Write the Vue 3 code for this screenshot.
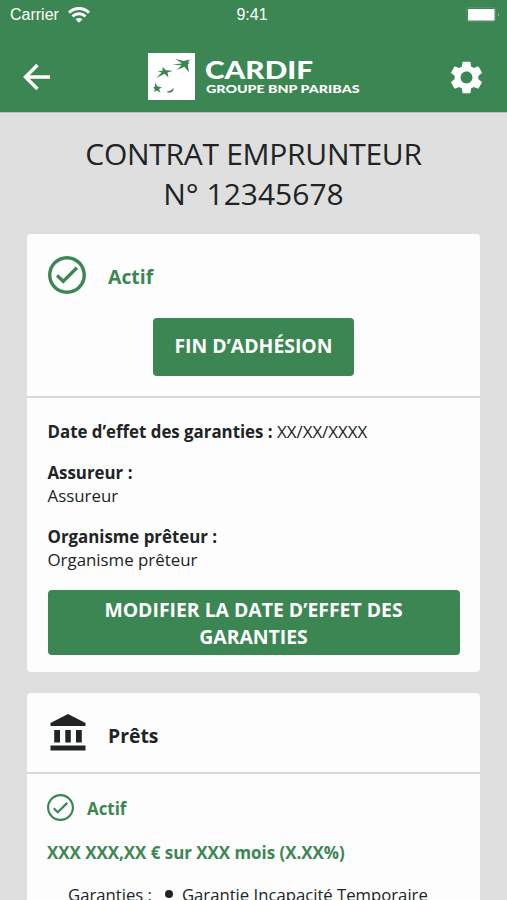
<script setup>
const fields = [
  { label: 'Assureur :', value: 'Assureur' },
  { label: 'Organisme prêteur :', value: 'Organisme prêteur' },
]
</script>

<template>
  <div class="screen">
    <header class="top">
      <div class="status">
        <div class="carrier">
          <span class="carrier-name">Carrier</span>
          <svg class="wifi" viewBox="0 0 22 16" width="22" height="16">
            <g fill="none" stroke="#fff" stroke-width="2.9">
              <path d="M1 5.600C6.800 .2 15.200 .2 21 5.600" />
              <path d="M4.500 9.300C8.300 5.900 13.700 5.900 17.500 9.300" />
            </g>
            <path d="M7.500 12.300C9.500 10.500 12.500 10.500 14.500 12.300L11 15.800Z" fill="#fff" />
          </svg>
        </div>
        <span class="clock">9:41</span>
        <svg class="battery" viewBox="0 0 34 15" width="34" height="15">
          <rect x=".5" y=".5" width="29" height="14" rx="2.5" fill="none" stroke="#fff" stroke-opacity=".12" />
          <rect x="2" y="2" width="26.500" height="11.500" rx=".6" fill="#fff" />
          <path d="M32 5.500q2 2 0 4z" fill="#fff" fill-opacity=".4" />
        </svg>
      </div>
      <nav class="bar">
        <svg class="back" viewBox="0 0 28 28" width="28" height="28">
          <path d="M27 14H3M14.500 2L2.500 14l12 12" fill="none" stroke="#fff" stroke-width="3.4" />
        </svg>
        <div class="brand">
          <svg class="emblem" viewBox="0 0 47 47" width="47" height="47">
            <rect width="47" height="47" fill="#fff" />
            <g fill="#3c8653">
              <path d="M27 5.800L35.500 8L42 6.500L40 9.500L42 9.800L39.800 11.200L41 19.500L36.500 13.700L29 17L33.500 12.200L24.500 11.700L34 10.200Z" />
              <path d="M14.500 14L18 17.200L25 17.800L19.500 19.500L20.500 24.500L16.500 20.800L8.500 25L13.500 19.500L9.500 18L14.500 17.800Z" />
              <path d="M7 29.500L9.300 33.300L14 34.500L11 36L12.500 39.700L9 37.500L6.200 39L6.900 36L5 34.700L6.900 33.700Z" />
              <path d="M19 38.600L22.500 37.500L26 35L25 38L23 39.500L19.500 39.500Z" />
            </g>
          </svg>
          <svg class="wordmark" viewBox="0 0 157 47" width="157" height="47" fill="#fff">
            <text class="cardif" x="0" y="25.700" textLength="108" lengthAdjust="spacingAndGlyphs">CARDIF</text>
            <text class="group" x="1" y="40.300" textLength="153.500" lengthAdjust="spacingAndGlyphs">GROUPE BNP PARIBAS</text>
          </svg>
        </div>
        <svg class="gear" viewBox="2 2 20 20" width="33" height="33">
          <path fill="#fff" d="M19.140 12.940c.04-.3.060-.61.060-.94 0-.32-.02-.64-.07-.94l2.030-1.580c.18-.14.230-.41.120-.61l-1.920-3.320c-.12-.22-.37-.29-.59-.22l-2.390.96c-.5-.38-1.030-.7-1.620-.94l-.36-2.540c-.04-.24-.24-.41-.48-.41h-3.840c-.24 0-.43.17-.47.41l-.36 2.540c-.59.24-1.130.57-1.620.94l-2.390-.96c-.22-.08-.47 0-.59.22L2.740 8.870c-.12.21-.08.47.12.61l2.030 1.580c-.05.3-.09.63-.09.94s.02.64.07.94l-2.030 1.580c-.18.14-.23.41-.12.61l1.920 3.320c.12.220.37.290.59.220l2.390-.96c.5.38 1.030.7 1.620.94l.36 2.540c.05.240.240.410.480.410h3.840c.24 0 .44-.17.47-.41l.36-2.540c.59-.24 1.130-.56 1.620-.94l2.390.96c.22.080.47 0 .59-.22l1.920-3.320c.12-.22.070-.47-.12-.61l-2.010-1.580zM12 15.600c-1.980 0-3.600-1.620-3.600-3.600s1.620-3.600 3.600-3.600 3.600 1.620 3.600 3.600-1.620 3.600-3.600 3.600z" />
        </svg>
      </nav>
    </header>

    <main class="content">
      <h1 class="title">
        <span class="title-name">CONTRAT EMPRUNTEUR</span>
        <span class="title-number">N° 12345678</span>
      </h1>

      <section class="card">
        <div class="summary">
          <div class="state">
            <svg class="check" viewBox="2 2 20 20" width="38" height="38">
              <path fill="#3c8653" d="M16.590 7.580L10 14.170l-2.590-2.580L6.200 12.800l3.800 3.800 7.800-7.800zM12 2C6.480 2 2 6.480 2 12s4.480 10 10 10 10-4.480 10-10S17.520 2 12 2zm0 18.200c-4.530 0-8.200-3.670-8.200-8.200s3.670-8.200 8.200-8.200 8.200 3.670 8.200 8.200-3.670 8.200-8.200 8.200z" />
            </svg>
            <span class="state-label">Actif</span>
          </div>
          <button class="btn btn-end">FIN D’ADHÉSION</button>
        </div>
        <div class="details">
          <p class="field"><b class="label">Date d’effet des garanties :</b> <span class="date">XX/XX/XXXX</span></p>
          <p v-for="f in fields" :key="f.label" class="field">
            <b class="label">{{ f.label }}</b><br />{{ f.value }}
          </p>
          <button class="btn btn-edit">MODIFIER LA DATE D’EFFET DES<br />GARANTIES</button>
        </div>
      </section>

      <section class="card loans">
        <div class="loans-head">
          <svg class="bank" viewBox="0 0 36 37" width="36" height="37" fill="#202425">
            <path d="M.5 12V9L18 0l17.500 9v3zM4.200 16H10v12.500H4.200zM15.300 16h5.500v12.500h-5.500zM26 16h5.800v12.500H26zM.5 31.500h35v5H.5z" />
          </svg>
          <span class="loans-title">Prêts</span>
        </div>
        <div class="loan">
          <div class="loan-state">
            <svg class="check" viewBox="2 2 20 20" width="27" height="27">
              <path fill="#3c8653" d="M16.400 8L10 14.400l-2.400-2.400L6.400 13.200l3.600 3.500 7.600-7.500zM12 2C6.480 2 2 6.480 2 12s4.480 10 10 10 10-4.480 10-10S17.520 2 12 2zm0 18.400c-4.640 0-8.400-3.760-8.400-8.400s3.760-8.400 8.400-8.400 8.400 3.760 8.400 8.400-3.760 8.400-8.400 8.400z" />
            </svg>
            <span class="loan-label">Actif</span>
          </div>
          <p class="amount">XXX XXX,XX € sur XXX mois (X.XX%)</p>
          <div class="cover">
            <span class="cover-label">Garanties :</span>
            <ul class="cover-list"><li class="cover-item">Garantie Incapacité Temporaire</li></ul>
          </div>
        </div>
      </section>
    </main>
  </div>
</template>

<style>
body { margin: 0; background: #dfdfdf; overflow: hidden; }
</style>

<style scoped>
.screen { box-sizing: border-box; width: 507px; height: 900px; overflow: hidden; background: #dfdfdf; color: #202425; font-family: "Open Sans", "Noto Sans", sans-serif; }
.top { height: 112px; background: #3c8653; border-bottom: 1px solid #b5c4b8; }
.status { display: grid; grid-template-columns: 1fr auto 1fr; height: 30px; align-items: center; padding: 0 7px 0 10px; color: #fff; font-family: "Liberation Sans", Arial, sans-serif; font-size: 16px; }
.carrier { display: flex; align-items: center; gap: 9px; }
.clock { margin-left: -6px; }
.battery { justify-self: end; margin-top: -2px; }
.bar { display: flex; align-items: center; height: 94px; padding: 0 24px 0 23px; }
.brand { display: flex; gap: 10px; margin: -1px auto 0 97px; }
.cardif { font: 900 24.500px Lato, sans-serif; }
.group { font: 900 12px Lato, sans-serif; }
.content { padding: 21px 27px 0; }
.title { display: flex; flex-direction: column; align-items: center; margin: 0; font-size: 30px; line-height: 40px; font-weight: 400; }
.title-name { letter-spacing: -.28px; }
.card { margin-top: 20px; background: #fdfdfd; border-radius: 4px; }
.summary { height: 162px; border-bottom: 2px solid #d9d9d9; }
.state { display: flex; align-items: center; gap: 22px; padding: 22px 21px 0; }
.state-label { font-size: 19.400px; line-height: 26px; font-weight: 700; color: #3c8653; margin-top: 4px; }
.btn { display: block; border: 0; border-radius: 4px; padding: 0; background: #3c8653; color: #fff; font-family: inherit; font-size: 19.400px; line-height: 26.400px; font-weight: 700; }
.btn-end { width: 201px; height: 58px; margin: 23.500px auto 0; }
.details { padding: 22px 20px 17px 20.500px; }
.field { margin: 0 0 18px; font-size: 16.850px; line-height: 23px; }
.label { font-weight: 700; }
.btn-edit { width: 412px; height: 65px; margin-top: 19px; padding-top: 2px; }
.loans { margin-top: 20.500px; }
.loans-head { display: flex; height: 79.500px; gap: 22px; align-items: center; padding-left: 23px; border-bottom: 2px solid #d9d9d9; }
.loans-title { font-size: 19.400px; font-weight: 700; margin-top: 6px; }
.loan { padding: 20px 20px 30px; }
.loan-state { display: flex; align-items: center; gap: 13px; }
.loan-label { color: #3c8653; font-size: 16.900px; line-height: 23px; font-weight: 700; margin-top: 1px; }
.amount { margin: 19.500px 0 19px; color: #3c8653; font-size: 16.900px; line-height: 23px; font-weight: 700; }
.cover { display: flex; gap: 13px; padding-left: 21px; font-size: 16.700px; line-height: 23px; white-space: nowrap; }
.cover-list { list-style: none; margin: 0; padding: 0; }
.cover-item { display: flex; align-items: center; gap: 9px; }
.cover-item::before { content: ""; width: 8px; height: 8px; border-radius: 50%; background: currentColor; }
</style>
